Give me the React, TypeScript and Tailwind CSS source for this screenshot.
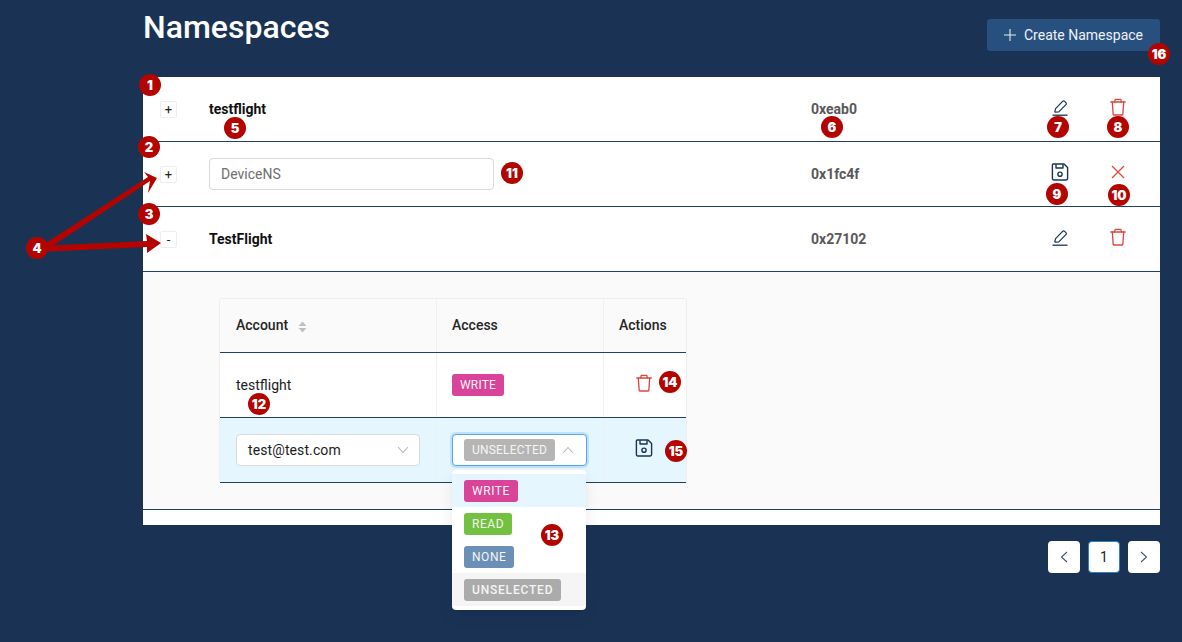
import React from "react";

const F = { fontFamily: "Roboto, 'Liberation Sans', sans-serif" } as const;

function Dot({ n, x, y }: { n: number; x: number; y: number }) {
  return (
    <div
      className="absolute z-30 flex h-[22px] w-[22px] items-center justify-center rounded-full bg-[#b30400] text-[13px] font-black leading-none text-white"
      style={{ left: x - 11, top: y - 11, fontFamily: "Inter, sans-serif" }}
    >
      {n}
    </div>
  );
}

function Pencil() {
  return (
    <svg width="18" height="18" viewBox="0 0 18 18" fill="none" stroke="#1a3355" strokeWidth="1.2" strokeLinejoin="round" className="mb-[2px]">
      <path d="M3.8 12.6 L4.6 9.6 L11.6 2.4 C12.2 1.8 13 1.8 13.6 2.4 L14.9 3.7 C15.5 4.3 15.5 5.1 14.9 5.7 L7.8 12.8 L4.2 13.2 Z" />
      <path d="M1.5 16.2 H16.5" strokeWidth="1.3" />
    </svg>
  );
}

function Trash({ className = "mb-[4px]" }: { className?: string }) {
  return (
    <svg width="18" height="18" viewBox="0 0 18 18" fill="none" stroke="#e0453a" strokeWidth="1.3" strokeLinejoin="round" strokeLinecap="round" className={className}>
      <path d="M1.8 4 H16.2" />
      <path d="M5.6 3.8 L6.2 1.3 H11.8 L12.4 3.8" />
      <path d="M3.3 4 L4.2 16.6 C4.2 16.9 4.5 17 4.8 17 H13.2 C13.5 17 13.8 16.9 13.8 16.6 L14.7 4" />
    </svg>
  );
}

function Save({ className = "mb-[4px]" }: { className?: string }) {
  return (
    <svg width="18" height="18" viewBox="0 0 18 18" fill="none" stroke="#1a3355" strokeWidth="1.4" strokeLinejoin="round" className={className}>
      <path d="M2.2 1 H13 L16.6 4.6 V15.6 C16.6 16.4 16 17 15.2 17 H2.8 C2 17 1.4 16.4 1.4 15.6 V1.8 C1.4 1.4 1.8 1 2.2 1 Z" />
      <path d="M5 1.2 V5 H12 V1.2" />
      <circle cx="9" cy="11.2" r="2.1" />
    </svg>
  );
}

function X() {
  return (
    <svg width="16" height="16" viewBox="0 0 16 16" fill="none" stroke="#e0453a" strokeWidth="1.3" className="mb-[5px] ml-[1px]">
      <path d="M2 2 L14 14 M14 2 L2 14" />
    </svg>
  );
}

function Chevron({ up }: { up?: boolean }) {
  return (
    <svg width="12" height="8" viewBox="0 0 12 8" fill="none" stroke="#b4b8bd" strokeWidth="1.1">
      <path d={up ? "M1 7 L6 1.5 L11 7" : "M1 1 L6 6.5 L11 1"} />
    </svg>
  );
}

function Expander({ sign }: { sign: string }) {
  return (
    <div className="flex h-[17px] w-[17px] items-center justify-center rounded-[2px] border border-[#eeeeee] bg-white text-[13px] leading-none text-[#222222]">
      {sign}
    </div>
  );
}

function Tag({ label, color, wide, bold }: { label: string; color: string; wide?: boolean; bold?: boolean }) {
  return (
    <span
      className={`inline-flex h-[22px] items-center rounded-[3px] px-2 text-[12px] ${bold ? "tracking-[0.8px]" : wide ? "tracking-[0.55px]" : "tracking-[0.2px]"} ${color} ${bold ? "font-medium text-[#f4f4f4]" : "text-[#f5f5f5]"}`}
    >
      {label}
    </span>
  );
}

function Row({ sign, name, id, icon1, icon2 }: { sign: string; name: React.ReactNode; id: string; icon1: React.ReactNode; icon2: React.ReactNode }) {
  return (
    <div className="flex h-[65px] items-center border-b border-[#1f3f63] bg-white">
      <div className="ml-[17px] w-[49px] shrink-0">
        <Expander sign={sign} />
      </div>
      <div className="w-[602px] shrink-0 text-[14px] font-bold text-[#111111]">{name}</div>
      <div className="w-[240px] shrink-0 text-[14px] font-bold text-[#595959]">{id}</div>
      <div className="flex w-[58px] shrink-0 items-center justify-start">{icon1}</div>
      <div className="flex shrink-0 items-center justify-start">{icon2}</div>
    </div>
  );
}

function Cell({ w, className = "", children }: { w: string; className?: string; children?: React.ReactNode }) {
  return <div className={`flex h-full shrink-0 items-center border-r border-[#f0f0f0] ${w} ${className}`}>{children}</div>;
}

export default function App() {
  return (
    <div className="relative h-[642px] w-[1182px] overflow-hidden bg-[#1a3355]" style={F}>
      <div className="mx-[22px] ml-[143px] w-[1017px]">
        <div className="flex h-[77px] items-start justify-between">
          <h1 className="mt-[8px] text-[32px] font-medium leading-[38px] text-white">Namespaces</h1>
          <button className="mt-[19px] flex h-[32px] w-[173px] items-center rounded-[3px] bg-[#28507f] pl-[17px] text-[14px] text-[#eef2f6]">
            <svg width="12" height="12" viewBox="0 0 12 12" stroke="#e6ebf0" strokeWidth="1.1" className="mr-[8px]">
              <path d="M6 0 V12 M0 6 H12" />
            </svg>
            Create Namespace
          </button>
        </div>

        <div className="h-[448px] bg-white">
          <Row sign="+" name="testflight" id="0xeab0" icon1={<Pencil />} icon2={<Trash />} />
          <Row
            sign="+"
            name={
              <div className="flex h-[32px] w-[285px] items-center rounded-[4px] border border-[#d9d9d9] px-[11px] text-[14px] font-normal text-[#6f6f6f]">
                DeviceNS
              </div>
            }
            id="0x1fc4f"
            icon1={<Save />}
            icon2={<X />}
          />
          <Row sign="-" name="TestFlight" id="0x27102" icon1={<Pencil />} icon2={<Trash />} />

          <div className="h-[238px] border-b border-[#1f3f63] bg-[#fafafa] pl-[76px] pt-[26px]">
            <div className="w-[468px] rounded-t-[3px] border-x border-t border-[#eeeeee]">
              <div className="flex h-[54px] border-b border-[#1f3f63] bg-[#fafafa] text-[14px] font-medium text-[#262626]">
                <Cell w="w-[217px]" className="pl-[16px]">
                  Account
                  <svg width="9" height="12" viewBox="0 0 9 12" fill="#bfbfbf" className="ml-[10px] mt-[2px]">
                    <path d="M4.5 0.5 L8.5 5 H0.5 Z M4.5 11.5 L8.5 7 H0.5 Z" />
                  </svg>
                </Cell>
                <Cell w="w-[167px]" className="pl-[15px]">Access</Cell>
                <Cell w="w-[82px]" className="border-r-0 pl-[15px]">Actions</Cell>
              </div>
              <div className="flex h-[65px] border-b border-[#1f3f63] bg-white text-[14px] text-[#1c1c1c]">
                <Cell w="w-[217px]" className="pl-[16px]">testflight</Cell>
                <Cell w="w-[167px]" className="pl-[15px]">
                  <Tag label="WRITE" color="bg-[#d9439a]" />
                </Cell>
                <Cell w="w-[82px]" className="border-r-0 pl-[31px]">
                  <Trash />
                </Cell>
              </div>
              <div className="flex h-[65px] border-b border-[#1f3f63] bg-[#e6f6ff] text-[14px] text-[#1c1c1c]">
                <Cell w="w-[217px]" className="pl-[16px]">
                  <div className="flex h-[32px] w-[184px] items-center justify-between rounded-[4px] border border-[#d9d9d9] bg-white pl-[11px] pr-[10px] tracking-[0.1px]">
                    test@test.com
                    <Chevron />
                  </div>
                </Cell>
                <Cell w="w-[167px]" className="pl-[15px]">
                  <div className="flex h-[32px] w-[135px] items-center justify-between rounded-[4px] border border-[#5aa7e6] bg-white pl-[11px] pr-[12px] shadow-[0_0_0_2px_rgba(24,144,255,0.2)]">
                    <Tag label="UNSELECTED" color="bg-[#b5b5b5]" />
                    <Chevron up />
                  </div>
                </Cell>
                <Cell w="w-[82px]" className="border-r-0 pl-[31px]">
                  <Save />
                </Cell>
              </div>
            </div>
          </div>
        </div>

        <div className="mt-[16px] flex justify-end gap-[8px]">
          <div className="flex h-[32px] w-[32px] items-center justify-center rounded-[4px] bg-white">
            <svg width="8" height="12" viewBox="0 0 8 12" fill="none" stroke="#3c5675" strokeWidth="1.1"><path d="M7 1 L1.5 6 L7 11" /></svg>
          </div>
          <div className="flex h-[32px] w-[32px] items-center justify-center rounded-[4px] border border-[#2f7fd0] bg-white text-[14px] text-[#222222]">1</div>
          <div className="flex h-[32px] w-[32px] items-center justify-center rounded-[4px] bg-white">
            <svg width="8" height="12" viewBox="0 0 8 12" fill="none" stroke="#3c5675" strokeWidth="1.1"><path d="M1 1 L6.5 6 L1 11" /></svg>
          </div>
        </div>
      </div>

      <div className="absolute left-[452px] top-[470px] z-20 w-[134px] overflow-hidden rounded-[4px] bg-white py-[4px] shadow-[0_3px_6px_-4px_rgba(0,0,0,0.12),0_6px_16px_0_rgba(0,0,0,0.08)]">
        <div className="flex h-[33px] items-center bg-[#e6f6ff] pl-[12px]"><Tag label="WRITE" color="bg-[#d9439a]" wide /></div>
        <div className="flex h-[33px] items-center pl-[12px]"><Tag label="READ" color="bg-[#72c140]" wide /></div>
        <div className="flex h-[33px] items-center pl-[12px]"><Tag label="NONE" color="bg-[#6c8fb8]" wide /></div>
        <div className="flex h-[33px] items-center bg-[#f5f5f5] pl-[12px]"><Tag label="UNSELECTED" color="bg-[#ababab]" wide bold /></div>
      </div>

      <svg className="absolute left-0 top-0 z-20" width="200" height="300" viewBox="0 0 200 300" fill="#b30400" stroke="none">
        <path d="M38 248 L148 177 L144 172 L157 178 L148 193 L150 181 L42 253 Z" />
        <path d="M38 246 L147 241 L146 234 L161 243 L147 253 L147 247 L38 252 Z" />
      </svg>

      <Dot n={1} x={150} y={85} />
      <Dot n={2} x={149} y={147} />
      <Dot n={3} x={149} y={214} />
      <Dot n={4} x={37} y={248} />
      <Dot n={5} x={235} y={128} />
      <Dot n={6} x={832} y={127} />
      <Dot n={7} x={1058} y={127} />
      <Dot n={8} x={1118} y={127} />
      <Dot n={9} x={1057} y={194} />
      <Dot n={10} x={1119} y={195} />
      <Dot n={11} x={512} y={173} />
      <Dot n={12} x={259} y={404} />
      <Dot n={13} x={552} y={535} />
      <Dot n={14} x={670} y={382} />
      <Dot n={15} x={676} y={451} />
      <Dot n={16} x={1159} y={54} />
    </div>
  );
}
